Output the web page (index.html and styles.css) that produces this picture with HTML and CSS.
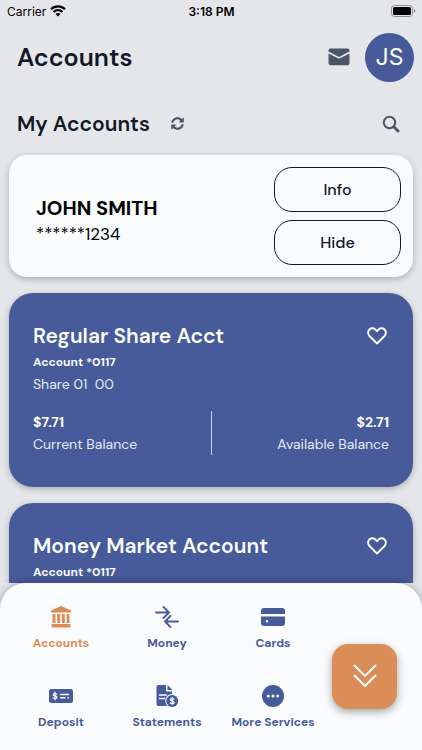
FILE: index.html
```html
<!DOCTYPE html>
<html lang="en">
<head>
  <meta charset="UTF-8" />
  <meta name="viewport" content="width=device-width, initial-scale=1.0"/>
  <title>Accounts</title>
  <link rel="stylesheet" href="styles.css">
</head>
<body>

  <div class="status-bar">
    <div class="carrier">
      <span>Carrier</span>
      <svg width="16" height="12" viewBox="0 0 16 12" fill="none" stroke="#000" stroke-width="2.2">
        <path d="M1 4.3a10 10 0 0 1 14 0"/>
        <path d="M3.6 7a6.3 6.3 0 0 1 8.8 0"/>
        <path d="M8 11.6 5.5 9.1a3.6 3.6 0 0 1 5 0z" fill="#000" stroke="none"/>
      </svg>
    </div>
    <span class="time">3:18 PM</span>
    <div class="battery">
      <svg width="25" height="12" viewBox="0 0 25 12">
        <rect x="0.5" y="0.5" width="21" height="11" rx="3" fill="none" stroke="#8b8c8f"/>
        <rect x="2" y="2" width="18" height="8" rx="1.5" fill="#000"/>
        <path d="M23 4c1.6.5 1.6 3.5 0 4z" fill="#77787b"/>
      </svg>
    </div>
  </div>

  <header>
    <h1>Accounts</h1>
    <a href="#messages" class="mail" aria-label="Messages">
      <svg width="22" height="18" viewBox="0 0 22 18" fill="#4a5568">
        <path d="M2.4.5h17.2A1.9 1.9 0 0 1 21.5 2.4v1.2L11 8.9.5 3.6V2.4A1.9 1.9 0 0 1 2.4.5z"/>
        <path d="M.5 5.5 11 10.8 21.5 5.5v9.6a2.2 2.2 0 0 1-2.2 2.2H2.7A2.2 2.2 0 0 1 .5 15.1z"/>
      </svg>
    </a>
    <a href="#profile" class="avatar">JS</a>
  </header>

  <main>
    <div class="section-head">
      <h2>My Accounts</h2>
      <button class="icon-btn" aria-label="Refresh">
        <svg width="13" height="13" viewBox="0 0 512 512" fill="#4a5568">
          <path d="M370.7 133.3C339.5 104 298.9 88 255.8 88c-77.5.1-144.3 53.2-162.8 126.9-1.3 5.4-6.1 9.1-11.7 9.1H24.1c-7.5 0-13.2-6.8-11.8-14.2C33.9 94.9 134.8 8 256 8c66.4 0 126.8 26.1 171.3 68.7L463 41c15.1-15.1 41-4.4 41 17v134c0 13.3-10.7 24-24 24H346c-21.4 0-32.1-25.9-17-41zM32 296h134c21.4 0 32.1 25.9 17 41l-41.8 41.8c31.3 29.3 71.8 45.3 114.9 45.3 77.4-.1 144.3-53.1 162.8-126.8 1.3-5.4 6.1-9.1 11.7-9.1h57.3c7.5 0 13.2 6.8 11.8 14.2C478.1 417.1 377.2 504 256 504c-66.4 0-126.8-26.1-171.3-68.7L49 471c-15.1 15.1-41 4.4-41-17V320c0-13.3 10.7-24 24-24z"/>
        </svg>
      </button>
      <button class="icon-btn search" aria-label="Search">
        <svg width="18" height="18" viewBox="0 0 18 18" fill="none" stroke="#4a5568" stroke-linecap="round">
          <circle cx="7.5" cy="7.5" r="5.7" stroke-width="2"/>
          <path d="m12 12 4 4" stroke-width="3"/>
        </svg>
      </button>
    </div>

    <section class="member-card">
      <div class="member">
        <h3>JOHN SMITH</h3>
        <p>******1234</p>
      </div>
      <div class="member-actions">
        <button>Info</button>
        <button>Hide</button>
      </div>
    </section>

    <section class="account-card">
      <div class="card-title">
        <h3>Regular Share Acct</h3>
        <button class="icon-btn" aria-label="Favorite">
          <svg width="20" height="18" viewBox="0 0 20 18" fill="none" stroke="#fff" stroke-width="1.9" stroke-linejoin="round">
            <path d="M10 16.5 2.7 9.3C.7 7.2.6 4.2 2.4 2.5c1.9-1.8 4.7-1.5 6.3.3L10 4.2l1.3-1.4c1.6-1.8 4.4-2.1 6.3-.3 1.8 1.7 1.7 4.7-.3 6.8z"/>
          </svg>
        </button>
      </div>
      <p class="number">Account *0117</p>
      <p class="share">Share 01&nbsp; 00</p>
      <div class="balances">
        <div>
          <strong>$7.71</strong>
          <span>Current Balance</span>
        </div>
        <div class="available">
          <strong>$2.71</strong>
          <span>Available Balance</span>
        </div>
      </div>
    </section>

    <section class="account-card">
      <div class="card-title">
        <h3>Money Market Account</h3>
        <button class="icon-btn" aria-label="Favorite">
          <svg width="20" height="18" viewBox="0 0 20 18" fill="none" stroke="#fff" stroke-width="1.9" stroke-linejoin="round">
            <path d="M10 16.5 2.7 9.3C.7 7.2.6 4.2 2.4 2.5c1.9-1.8 4.7-1.5 6.3.3L10 4.2l1.3-1.4c1.6-1.8 4.4-2.1 6.3-.3 1.8 1.7 1.7 4.7-.3 6.8z"/>
          </svg>
        </button>
      </div>
      <p class="number">Account *0117</p>
    </section>
  </main>

  <nav>
    <div class="tabs">
      <a href="#accounts" class="active">
        <svg width="24" height="24" viewBox="0 0 24 24" fill="currentColor">
          <path d="M12 1 22 5.5v2H2v-2z"/>
          <path d="M3.5 9h3v9h-3zM8.2 9h3v9h-3zM12.8 9h3v9h-3zM17.5 9h3v9h-3z"/>
          <rect x="2.5" y="19" width="19" height="3.5" rx="1"/>
        </svg>
        Accounts
      </a>
      <a href="#money">
        <svg width="24" height="24" viewBox="0 0 24 24" fill="none" stroke="currentColor" stroke-width="1.8" stroke-linecap="round" stroke-linejoin="round">
          <path d="M1 7.5h13M8.5 2 14 7.5 8.5 13M23 16.5H10M15.5 11 10 16.5l5.5 5.5"/>
        </svg>
        Money
      </a>
      <a href="#cards">
        <svg width="26" height="24" viewBox="0 0 26 24" fill="currentColor">
          <path d="M4 3h18a3 3 0 0 1 3 3v3H1V6a3 3 0 0 1 3-3z"/>
          <path fill-rule="evenodd" d="M1 11.5h24V18a3 3 0 0 1-3 3H4a3 3 0 0 1-3-3zm6 3.5a1.3 1.3 0 1 0 0 2.6A1.3 1.3 0 0 0 7 15z"/>
        </svg>
        Cards
      </a>
      <a href="#deposit">
        <svg width="26" height="24" viewBox="0 0 26 24" fill="none" stroke="#fafbfd" stroke-linecap="round">
          <rect x="1" y="5" width="24" height="14" rx="2.5" fill="currentColor" stroke="none"/>
          <path d="M8.8 10.1c-.7-.7-3.6-.8-3.6.6 0 1.7 3.8.8 3.8 2.7 0 1.4-3 1.4-4 .5M7 8.2v7.6" stroke-width="1.2"/>
          <path d="M12.5 10.5h8M12.5 13.7h4.5M20 13.7h.5" stroke-width="1.4"/>
        </svg>
        Deposit
      </a>
      <a href="#statements">
        <svg width="24" height="24" viewBox="0 0 24 24" fill="none">
          <path d="M3.5 1H11v6.5h6v4.500a6 6 0 0 0-4.300 10H3.500a2 2 0 0 1-2-2V3a2 2 0 0 1 2-2zM12.500 1 17.500 6h-5z" fill="currentColor"/>
          <path d="M4 11h8M4 14.5h6" stroke="#fafbfd" stroke-width="1.4"/>
          <circle cx="17" cy="16.8" r="6.8" fill="#fafbfd"/>
          <circle cx="17.2" cy="17" r="6" fill="currentColor"/>
          <path d="M19 15.2c-.7-.7-3.6-.8-3.6.6 0 1.7 3.8.8 3.8 2.7 0 1.4-3 1.4-4 .5M17.2 13.4v7.2" stroke="#fafbfd" stroke-width="1.2" stroke-linecap="round"/>
        </svg>
        Statements
      </a>
      <a href="#more">
        <svg width="24" height="24" viewBox="0 0 24 24">
          <circle cx="12" cy="12" r="11" fill="currentColor"/>
          <g fill="#fafbfd">
            <circle cx="7.3" cy="12" r="1.5"/><circle cx="12" cy="12" r="1.5"/><circle cx="16.7" cy="12" r="1.5"/>
          </g>
        </svg>
        More Services
      </a>
    </div>
    <button class="collapse-btn" aria-label="Collapse menu">
      <svg width="24" height="24" viewBox="0 0 24 24" fill="none" stroke="#fff" stroke-width="2" stroke-linecap="round" stroke-linejoin="round">
        <path d="m1.5 1.5 10.5 10.500 10.500-10.500M1.500 11.500 12 22l10.500-10.500"/>
      </svg>
    </button>
  </nav>

</body>
</html>
```
FILE: styles.css
```css
* { margin: 0; padding: 0; box-sizing: border-box; }
body {
  font-family: "DM Sans", Inter, sans-serif;
  background: #e5e6ea;
  color: #111827;
  height: 100vh;
  display: flex;
  flex-direction: column;
  overflow: hidden;
}
a { text-decoration: none; }
button {
  font-family: inherit;
  cursor: pointer;
}
svg { display: block; }

.status-bar {
  display: grid;
  grid-template-columns: 1fr auto 1fr;
  align-items: center;
  height: 22px;
  padding: 0 6px 0 7px;
  font-family: Inter, sans-serif;
  font-size: 12px;
  color: #000;
}
.carrier {
  display: flex;
  align-items: center;
  gap: 4px;
}
.time { font-weight: 600; }
.battery {
  display: flex;
  justify-content: flex-end;
}

header {
  display: flex;
  align-items: center;
  height: 70px;
  padding: 0 8px 0 17px;
}
h1 {
  flex: 1;
  font-size: 25px;
  font-weight: 600;
}
.mail { margin-right: 15px; }
.avatar {
  width: 49px;
  height: 49px;
  border-radius: 50%;
  background: #475a99;
  color: white;
  font-family: Inter, sans-serif;
  font-size: 23px;
  line-height: 49px;
  text-align: center;
}

main {
  flex: 1;
  min-height: 0;
  overflow-y: auto;
  scrollbar-width: none;
  padding: 0 9px;
}
.section-head {
  display: flex;
  align-items: center;
  height: 63px;
  padding: 0 13px 0 8px;
}
h2 {
  font-size: 21px;
  font-weight: 600;
}
.icon-btn {
  border: none;
  background: transparent;
}
.section-head .icon-btn { margin-left: 21px; }
.section-head .search { margin-left: auto; }

.member-card {
  display: flex;
  justify-content: space-between;
  align-items: center;
  padding: 12px 12px 12px 27px;
  margin-bottom: 16px;
  border-radius: 18px;
  background: #fafbfd;
  box-shadow: 0 2px 6px rgba(0, 0, 0, 0.25);
  color: #000;
}
.member { padding-top: 9px; }
.member h3 {
  font-size: 20px;
  line-height: 26px;
  font-weight: 700;
}
.member p {
  font-size: 17px;
  line-height: 26px;
}
.member-actions {
  display: flex;
  flex-direction: column;
  gap: 8px;
}
.member-actions button {
  width: 127px;
  height: 45px;
  border: 1px solid #111827;
  border-radius: 18px;
  background: transparent;
  color: #111827;
  font-size: 16px;
  font-weight: 500;
}

.account-card {
  min-height: 194px;
  padding: 28px 24px 24px;
  margin-bottom: 16px;
  border-radius: 24px;
  background: #475a99;
  box-shadow: 0 2px 6px rgba(0, 0, 0, 0.25);
  color: #fafbfd;
}
.card-title {
  display: flex;
  justify-content: space-between;
  align-items: center;
  padding-right: 2px;
}
.card-title h3 {
  font-size: 21px;
  line-height: 30px;
  font-weight: 600;
}
.number {
  font-size: 12px;
  line-height: 22px;
  font-weight: 700;
}
.share {
  font-size: 14px;
  line-height: 22px;
  color: #e5e9f5;
}
.balances {
  display: flex;
  margin-top: 16px;
  font-size: 14px;
  line-height: 22px;
}
.balances div {
  flex: 1;
  display: flex;
  flex-direction: column;
}
.balances .available {
  border-left: 1px solid #c9cfe2;
  text-align: right;
}
.balances strong { font-weight: 700; }
.balances span { color: #e5e9f5; }

nav {
  display: flex;
  align-items: center;
  gap: 6px;
  padding: 22px 25px 17px 8px;
  border-radius: 26px 26px 0 0;
  background: #fafbfd;
  box-shadow: 0 0 8px rgba(0, 0, 0, 0.3);
}
.tabs {
  flex: 1;
  display: grid;
  grid-template-columns: repeat(3, 1fr);
  row-gap: 30px;
}
.tabs a {
  display: flex;
  flex-direction: column;
  align-items: center;
  gap: 3px;
  color: #475a99;
  font-size: 12px;
  line-height: 22px;
  font-weight: 700;
  white-space: nowrap;
}
.tabs .active { color: #db8d58; }
.collapse-btn {
  display: grid;
  place-items: center;
  width: 65px;
  height: 65px;
  margin-top: 14px;
  border: none;
  border-radius: 16px;
  background: #db8d58;
  box-shadow: 0 3px 8px rgba(0, 0, 0, 0.35);
}
```
